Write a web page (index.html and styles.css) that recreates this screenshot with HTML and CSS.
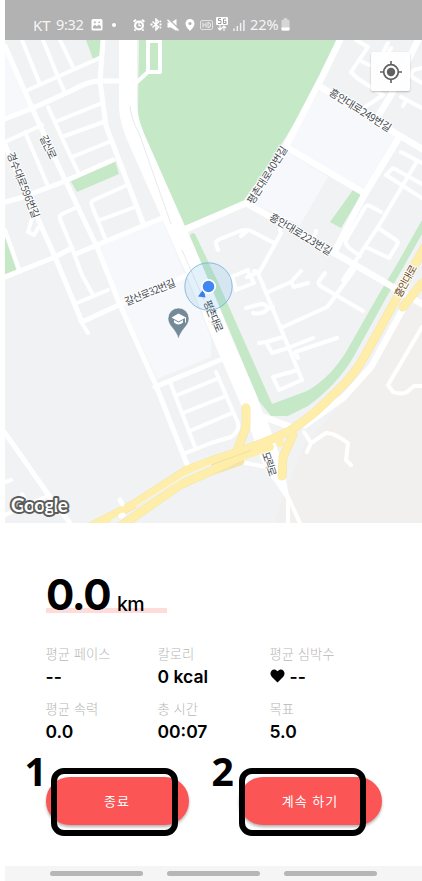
FILE: index.html
```html
<!DOCTYPE html>
<html lang="ko">
<head>
<meta charset="utf-8">
<title>Running</title>
<link rel="stylesheet" href="styles.css">
</head>
<body>
<main class="app">
  <header class="status">
    <span class="carrier">KT</span>
    <span class="clock">9:32</span>
    <svg class="ic-image" width="12" height="12" viewBox="0 0 12 12"><path fill="#fff" fill-rule="evenodd" d="M2 0h8a1.500 1.500 0 0 1 1.500 1.500v8.500a1.500 1.500 0 0 1-1.500 1.500H2a1.500 1.500 0 0 1-1.500-1.500V1.500A1.500 1.500 0 0 1 2 0zM2 9.500h8V7.500L7.800 5.500 6 7.300 4 5.800 2 7.500zM3 2.500v1.700h1.700V2.500zM7.500 2.500v1.500H9V2.500z"/></svg>
    <span class="dot"></span>
    <svg class="ic-alarm" width="12" height="12" viewBox="0 0 12 12"><circle cx="6" cy="6.500" r="5" fill="#fff"/><path stroke="#fff" stroke-width="2" d="M.6 2.800 3 .8M11.400 2.800 9 .8M2.500 10.500l-1 1.200M9.500 10.500l1 1.200"/><circle cx="6" cy="6.500" r="2.800" fill="#b2b2b2"/><path fill="none" stroke="#fff" stroke-width="1.200" d="M6 4v2.700h2"/></svg>
    <svg class="ic-bt" width="12" height="13" viewBox="0 0 12 13"><path fill="none" stroke="#fff" stroke-width="1.500" d="m2.500 3.500 6.200 5.500L6 11.800V1.200l2.700 2.600-6.200 5.700"/><path stroke="#fff" stroke-width="1.800" d="M.5 6.500h2M9.500 6.500h2M10 3.800l1-.8M10 9.200l1 .8"/></svg>
    <svg class="ic-mute" width="12" height="12" viewBox="0 0 12 12"><path fill="#fff" d="M.5 3.500h3.500L9.500 0v12L4 8.500H.5z"/><path stroke="#b2b2b2" stroke-width="1.300" d="M1.500 0 12 10"/><path stroke="#fff" stroke-width="1.500" d="m.5.700 11 10.800"/></svg>
    <svg class="ic-place" width="10" height="12" viewBox="0 0 10 12"><path fill="#fff" fill-rule="evenodd" d="M5 0a4.500 4.500 0 0 1 4.500 4.500C9.500 8 5 12 5 12S.5 8 .5 4.500A4.500 4.500 0 0 1 5 0zm0 2.900a1.600 1.600 0 1 0 0 3.200 1.600 1.600 0 0 0 0-3.200z"/></svg>
    <svg class="ic-hd" width="13" height="10" viewBox="0 0 13 10"><rect x=".5" y=".5" width="12" height="9" rx="1.500" fill="none" stroke="#e2e2e2"/><path fill="none" stroke="#e8e8e8" stroke-width="1.100" d="M3 2.500v5M6 2.500v5M3 5h3M8 2.500v5c3.300.3 3.300-5.300 0-5z"/></svg>
    <svg class="ic-5g" width="12" height="14" viewBox="0 0 12 14"><rect width="12" height="8" rx="1" fill="#fff"/><path fill="none" stroke="#999" d="M5 1.500H2.500v2H5v3H2M10 2H7.500v4.500H10V4.500H8.500"/><path fill="none" stroke="#fff" stroke-width="1.100" d="M4 8v5M2 11l2 2 2-2M8 14V9M6 11l2-2 2 2"/></svg>
    <svg class="ic-signal" width="12" height="12" viewBox="0 0 12 12"><path stroke="#f0f0f0" stroke-width="1.500" d="M1 9.500V12M4.300 7v5M7.600 4v8M10.900 1v11"/></svg>
    <span class="percent">22%</span>
    <svg class="ic-batt" width="9" height="13" viewBox="0 0 9 13"><path fill="#d6d6d6" d="M3 0h3v1.500h1a1.500 1.500 0 0 1 1.500 1.500v8.500a1 1 0 0 1-1 1h-6a1 1 0 0 1-1-1V3A1.500 1.500 0 0 1 2 1.500h1z"/><path fill="#fff" d="M.5 9.500h8v2a1 1 0 0 1-1 1h-6a1 1 0 0 1-1-1z"/></svg>
  </header>

  <section class="map">
    <svg class="map-canvas" width="417" height="483" viewBox="5 40 417 483">
      <rect x="5" y="40" width="417" height="483" fill="#f0f2f4"/>
      <!-- land areas -->
      <g fill="#f7f8fb">
        <path d="M5 52 30 108 5 118zM99 247l63-27 22 52 27 66v19l-54 22-37-79zM321 88l77 48-35 56-76-47zM284 150l44 27-28 48-50-23z"/>
      </g>
      <path fill="#f1f0ef" d="M422 300 404 311 346 400 304 445 289 483 274 523H422z"/>
      <g fill="#c5e8c7">
        <path d="M139 40H336L321 79 284 140 246 200 184 226 147 142Q138 122 138 110zM86 40h16v14l-9 5zM70 180l45-19 4 13-42 18zM5 237 17 272 5 277zM353 190l8 5-20 33-11-6z"/>
        <path d="M190 236q1-5 5-2l23 48 54 122 35-13q23-13 39-39l33-58 17-28 26-46v14l-26 46-42 76q-16 28-46 50l-20 10h-17l-12-15z"/>
      </g>
      <!-- minor streets -->
      <g class="street minor">
        <path d="M22 40 39 82M43 40 58 77 65 93M60 40 73 67M28 90 57 77 102 57M48 107 63 140 78 172M55 122 102 103M62 137 106 121M72 157 109 142M25 132 47 184M5 142 42 125M5 230 20 272M75 208 62 214Q59 216 60 219L72 248 82 275 92 293M125 186 94 200Q90 202 92 206L105 238M135 207 100 220M77 303 108 290M80 320 88 333M32 218 28 232 34 235 38 228"/>
        <path d="M148 40V72H160V41H148M148 72 137 82"/>
        <path d="M170 382 195 447M175 396 219 378M183 413 226 396M192 430 232 413M183 454 211 443 231 437Q240 431 238 423L216 372"/>
        <path d="M356 40 368 47 351 72 357 78 383 95 365 107M359 60 369 65M388 43 378 62M391 48 381 65M401 97 422 108M406 101 403 106M422 68Q408 70 412 77L422 83M401 152 422 163M422 184 393 168 386 175 422 198M416 163 378 227 343 280M381 212 370 206Q366 204 364 209L346 240Q345 244 349 248L360 256M378 228 396 240Q399 242 397 245L389 258 366 247"/>
        <path d="M218 250 216 244Q215 241 220 239L240 231Q246 229 251 231L274 243M241 236 246 232M281 233 259 273M316 231 314 237M284 219 280 230M233 279 236 290 254 283 247 270M231 277 248 270M247 277 259 272 254 271M258 273 302 380 279 390 273 377 298 370M268 292 291 282 301 271M291 282 294 287 308 283M325 273 319 281Q317 284 322 287L363 311M354 270 331 302 327 307 283 327M246 308 257 305Q265 302 268 308 264 315 253 313M268 309 273 307M259 343 266 342 272 353 288 348 313 338M266 342 283 337M298 358 295 352 337 338"/>
        <path d="M422 327 388 385 393 392Q401 395 407 392L414 386H422M304 432 311 443 307 452M311 443 326 433Q333 432 348 443L346 460 351 465M5 482 11 480M5 515 50 495M22 494 26 502M241 462 266 467 288 497V523M288 497 300 523"/>
      </g>
      <g class="street">
        <path d="M5 46 33 110 65 180 97 247 120 305 155 383 188 467M5 119 33 108 73 90Q88 81 100 81H126M103 40 100 81 106 126 143 223M5 202 20 198 63 182 113 160M5 145 55 257 82 322M5 277 55 257 72 248M76 254 97 245 162 218M82 322 123 303 188 275M155 387 220 360M5 433 50 497 70 523"/>
      </g>
      <g class="street wide">
        <path d="M340 40 322 77 286 146 246 203 184 230M321 87 397 134 422 149M286 147 364 193M418 40 391 95 378 116M400 136 363 197 334 253M246 203 338 255 422 304M404 307 371 367 344 397 305 425M264 417 291 427"/>
      </g>
      <path fill="none" stroke="#fff" stroke-width="18" d="M128 40V108Q129 122 137 140L191 262 222 338 250 403"/>
      <path fill="#fff" d="M240 399 257 397Q263 414 267 420L282 462 290 500 286 499 261 460z"/>
      <path fill="none" stroke="#e8eaec" stroke-width="1" d="M130 106Q131 119 139 133L171 224M182 250 204 300"/>
      <!-- trunk road -->
      <g class="trunk-edge"><path d="M424 248 394 303 368 350Q355 376 334 394 313 416 291 430 265 444 211 461L187 470 133 505 90 527M240 461 211 471 180 485 118 528M422 283 403 307M246 408V427L237 451M293 435 283 457 282 476"/></g>
      <g class="trunk"><path d="M424 248 394 303 368 350Q355 376 334 394 313 416 291 430 265 444 211 461L187 470 133 505 90 527M270 447 240 457 211 471 180 485 118 528M422 283 403 307M246 408V427L237 451M293 435 283 457 282 476M278 439 280 443"/></g>
      <path fill="none" stroke="#eee0a8" stroke-width="1" d="M252 450 211 465"/>
      <path fill="none" stroke="#f5f3e6" stroke-width="2" d="M211 465 184 477 136 507M124 514 111 521"/>
      <path fill="none" stroke="#fff" stroke-width="5" stroke-linecap="round" d="M120 500 122 504M121 516 123 515"/>
      <!-- street names -->
      <g class="names">
        <text transform="translate(48.500 147) rotate(65)" textLength="25" dy="4">갈산로</text>
        <text transform="translate(23.500 185) rotate(68)" textLength="70" dy="4">경수대로596번길</text>
        <text transform="translate(150 292) rotate(-22)" textLength="54" dy="4">갈산로32번길</text>
        <text transform="translate(213.500 316) rotate(67)" textLength="34" dy="4">평촌대로</text>
        <text transform="translate(267 175) rotate(-58)" textLength="66" dy="4">평촌대로40번길</text>
        <text transform="translate(360.500 110) rotate(32)" textLength="71" dy="4">흥안대로249번길</text>
        <text transform="translate(301 234) rotate(31)" textLength="71" dy="4">흥안대로223번길</text>
        <text class="brown" transform="translate(405.500 281) rotate(-61)" textLength="35" dy="4">흥안대로</text>
        <text transform="translate(269.500 464) rotate(72)" textLength="25" dy="4">모락로</text>
      </g>
      <!-- school marker -->
      <path fill="#738b98" stroke="#fff" stroke-width=".5" d="M178.500 339C176 329 168 326 168 318.500a10.500 10.500 0 0 1 21 0C189 326 181 329 178.500 339z"/>
      <path fill="#fff" d="m171.500 317.500 7-4 7.500 4-7.500 4zM174 320l4.500 2.600L183 320v2.500q-4.500 4-9 0z"/><path fill="none" stroke="#fff" d="M185.500 317.500v5"/>
      <!-- current location -->
      <circle cx="208.500" cy="286.500" r="23.700" fill="#459edb" fill-opacity=".15" stroke="#73aedb" stroke-opacity=".8"/>
      <path fill="#3b7ded" d="m203.500 289-5.500 7.500 7.500 1z"/>
      <circle cx="208.500" cy="286.500" r="7.500" fill="#fff"/><circle cx="208.500" cy="286.500" r="5.800" fill="#4285f4"/>
      <text class="google" x="11" y="512" textLength="57">Google</text>
    </svg>
    <button class="locate" aria-label="현재 위치">
      <svg width="24" height="24" viewBox="0 0 24 24"><circle cx="12" cy="12" r="7.300" fill="none" stroke="#616161" stroke-width="1.700"/><circle cx="12" cy="12" r="4.200" fill="#616161"/><path stroke="#616161" stroke-width="1.600" d="M12 1v4M12 19v4M1 12h4M19 12h4"/></svg>
    </button>
  </section>

  <section class="summary">
    <div class="distance"><strong>0.0</strong><span>km</span></div>
    <dl class="stats">
      <div><dt>평균 페이스</dt><dd>--</dd></div>
      <div><dt>칼로리</dt><dd>0 kcal</dd></div>
      <div><dt>평균 심박수</dt><dd><svg class="heart" width="15" height="14" viewBox="0 0 16 15"><path d="M8 14.500 1.800 8.200C-1.800 4.300 2.500-1.500 7 1.500L8 2.300l1-.8c4.500-3 8.800 2.800 5.200 6.700z"/></svg>--</dd></div>
      <div><dt>평균 속력</dt><dd>0.0</dd></div>
      <div><dt>총 시간</dt><dd>00:07</dd></div>
      <div><dt>목표</dt><dd>5.0</dd></div>
    </dl>
    <div class="actions">
      <div class="action"><button class="pill">종료</button><span class="frame"></span><b class="step">1</b></div>
      <div class="action second"><button class="pill">계속 하기</button><span class="frame"></span><b class="step">2</b></div>
    </div>
  </section>

  <footer class="navbar"><i></i><i></i><i></i></footer>
</main>
</body>
</html>
```
FILE: styles.css
```css
* { box-sizing: border-box; }
body { margin: 0; background: #fff; font-family: Inter, "Noto Sans CJK KR", sans-serif; color: #000; }
.app { display: flex; flex-direction: column; width: 417px; height: 881px; margin-left: 5px; overflow: hidden; }
svg { display: block; flex: none; }

.status { display: flex; align-items: center; height: 40px; padding: 9px 0 0 28px; background: #b2b2b2; color: #f6f6f6; font: 400 14.500px/20px "Noto Sans", sans-serif; white-space: nowrap; }
.carrier { width: 23px; padding-top: 1px; font-size: 15px; }
.clock { width: 34px; margin-top: -1px; letter-spacing: -0.3px; }
.ic-image { margin-left: 1px; }
.dot { width: 4px; height: 4px; margin: 0 17px 0 9px; border-radius: 50%; background: #fff; }
.ic-bt { margin-left: 5px; }
.ic-mute { margin-left: 5px; }
.ic-place { margin-left: 6px; }
.ic-hd { margin-left: 5px; }
.ic-5g { margin-left: 3px; margin-top: -2px; }
.ic-signal { margin-left: 5px; }
.percent { width: 31px; margin: -1px 0 0 5px; letter-spacing: 0; }

.map { position: relative; height: 483px; overflow: hidden; }
.street path { fill: none; stroke: #fff; stroke-width: 5; stroke-linecap: round; stroke-linejoin: round; }
.minor path { stroke-width: 4; }
.wide path { stroke-width: 6.500; }
.trunk path, .trunk-edge path { fill: none; stroke: #feeeaa; stroke-linecap: round; stroke-linejoin: round; }
.trunk path { stroke-width: 7.800; }
.trunk-edge path { stroke: #f4e4a8; stroke-width: 8.800; }
.names text { font: 400 10.500px "Noto Sans CJK KR", sans-serif; fill: #454b50; stroke: #fff; stroke-width: 2px; paint-order: stroke; stroke-linejoin: round; text-anchor: middle; }
.names .brown { fill: #6b4512; }
.google { font: 700 19px Lato, sans-serif; fill: #fff; stroke: #5c5c5c; stroke-width: 4px; paint-order: stroke; stroke-linejoin: round; }
.locate { position: absolute; top: 12px; right: 12px; display: grid; place-items: center; width: 39px; height: 39px; padding: 0; border: 0; border-radius: 2px; background: rgba(255, 255, 255, .9); box-shadow: 0 1px 2px rgba(0, 0, 0, .25); }

.summary { flex: 1; padding: 49px 40px 0 41px; }
.distance { display: flex; align-items: baseline; width: 121px; height: 41px; line-height: 47px; background: linear-gradient(#fddcda, #fddcda) 0 36px / 121px 5px no-repeat; }
.distance strong { width: 71px; margin-top: -1px; font-size: 42px; font-weight: 700; letter-spacing: -1.300px; }
.distance span { font-size: 19.500px; font-weight: 500; letter-spacing: -0.700px; transform: translateY(1px); }
.stats { display: grid; grid-template-columns: repeat(3, 112px); row-gap: 6px; margin: 30px 0 0 -0.500px; }
.stats > div { height: 49px; }
dt { height: 21px; color: #b8b8b8; font: 300 13.300px/22px "Noto Sans CJK KR", sans-serif; white-space: nowrap; }
dd { display: flex; align-items: center; gap: 5px; height: 24px; margin: 0; font-size: 17.500px; font-weight: 600; }
.actions { display: flex; gap: 50px; margin-top: 30px; }
.action { position: relative; width: 143px; left: -0.500px; }
.pill { display: block; width: 143px; height: 48px; padding: 0 0 2px; border: 0; border-radius: 24px; background: #fc5555; box-shadow: 0 2px 3px rgba(0, 0, 0, .3); color: #fff; font: 400 13px "Noto Sans CJK KR", sans-serif; letter-spacing: 1px; }
.frame { position: absolute; top: -9px; left: 5.500px; width: 127px; height: 68px; border: 6px solid #000; border-radius: 13px; }
.second .frame { left: 0.500px; }
.step { position: absolute; top: -33px; left: -21px; font: 700 39px/54px "Noto Sans", sans-serif; }
.second .step { left: -27px; }
.navbar { display: flex; gap: 24px; height: 15px; padding: 5px 0 0 45px; background: #f5f5f5; }
.navbar i { width: 93px; height: 5px; border-radius: 3px; background: #b6b6b6; }
```
